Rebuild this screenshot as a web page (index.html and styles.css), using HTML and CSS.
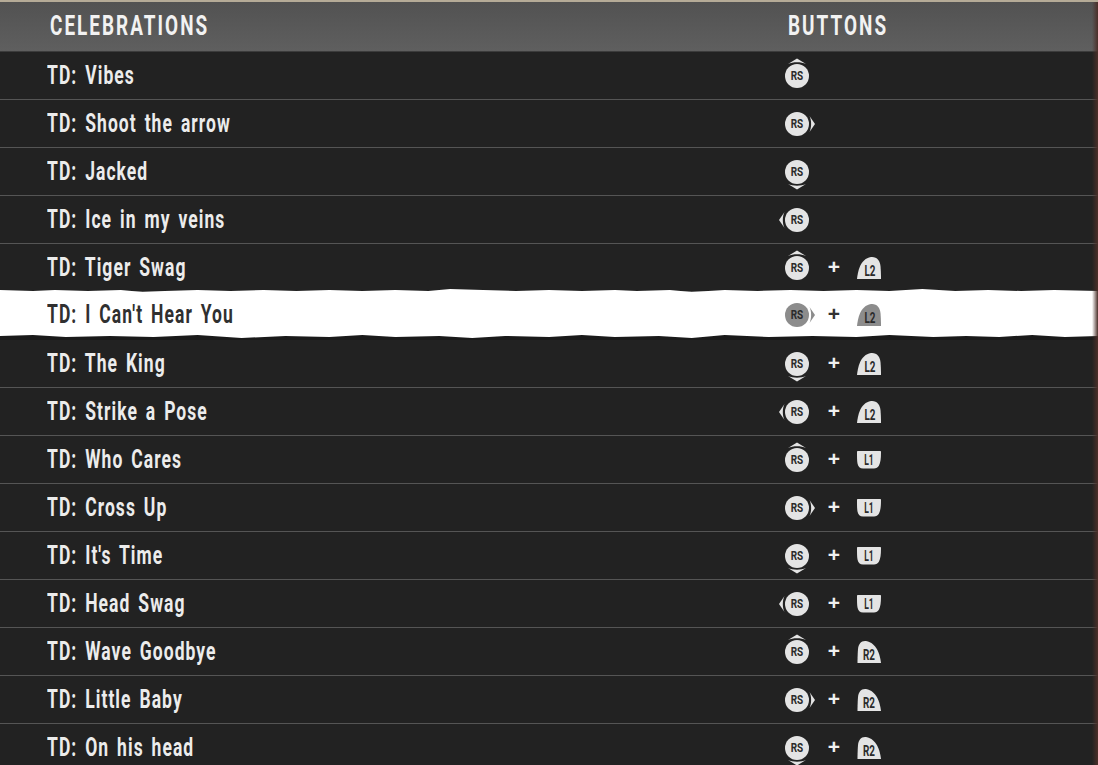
FILE: index.html
```html
<!DOCTYPE html>
<html lang="en">
<head>
<meta charset="utf-8">
<title>Celebrations</title>
<link rel="stylesheet" href="styles.css">
</head>
<body>
<svg class="defs" width="0" height="0" aria-hidden="true">
  <symbol id="rs" viewBox="0 0 36 36">
    <circle cx="18" cy="18" r="12" fill="currentColor"/>
  </symbol>
  <symbol id="up" viewBox="0 0 36 36"><path d="M9 6 18 .5 27 6C22 3.800 14 3.800 9 6Z" fill="currentColor"/></symbol>
  <symbol id="right" viewBox="0 0 36 36"><path d="M30.500 10 36 18l-5.500 8c2.200-4.500 2.200-11.500 0-16Z" fill="currentColor"/></symbol>
  <symbol id="down" viewBox="0 0 36 36"><path d="M9 30 18 35.500 27 30C22 32.200 14 32.200 9 30Z" fill="currentColor"/></symbol>
  <symbol id="left" viewBox="0 0 36 36"><path d="M5.500 10 0 18l5.500 8c-2.200-4.500-2.200-11.500 0-16Z" fill="currentColor"/></symbol>
  <symbol id="dome-l" viewBox="0 0 24 24"><path d="M0 23C1 15 3 3 14 1c6-.6 9 4 9.500 9 .4 5 .5 9 .5 13Z" fill="currentColor"/></symbol>
  <symbol id="dome-r" viewBox="0 0 24 24"><path d="M24 23C23 15 20 3 9 1 4 .5 1.500 4 1 9 .6 14 .5 19 .5 23Z" fill="currentColor"/></symbol>
  <symbol id="bumper" viewBox="0 0 24 20"><path d="M1 1h22c1 0 1 .5 1 1.500 0 6-.5 10-2 13-1 2-3 3-5 3H6c-3 0-5-2-5.500-5C0 11 0 6 0 2.500 0 1.500 0 1 1 1Z" fill="currentColor"/></symbol>
</svg>

<main class="panel">
  <header class="head">
    <h1 class="head-name">CELEBRATIONS</h1>
    <h2 class="head-name">BUTTONS</h2>
  </header>

  <div class="row"><span class="name">TD: Vibes</span><span class="combo"><svg class="stick" viewBox="0 0 36 36"><use href="#rs"/><use href="#up"/><text x="18" y="22" textLength="12.500" lengthAdjust="spacingAndGlyphs" class="rs-t">RS</text></svg></span></div>
  <div class="row"><span class="name">TD: Shoot the arrow</span><span class="combo"><svg class="stick" viewBox="0 0 36 36"><use href="#rs"/><use href="#right"/><text x="18" y="22" textLength="12.500" lengthAdjust="spacingAndGlyphs" class="rs-t">RS</text></svg></span></div>
  <div class="row"><span class="name">TD: Jacked</span><span class="combo"><svg class="stick" viewBox="0 0 36 36"><use href="#rs"/><use href="#down"/><text x="18" y="22" textLength="12.500" lengthAdjust="spacingAndGlyphs" class="rs-t">RS</text></svg></span></div>
  <div class="row"><span class="name">TD: Ice in my veins</span><span class="combo"><svg class="stick" viewBox="0 0 36 36"><use href="#rs"/><use href="#left"/><text x="18" y="22" textLength="12.500" lengthAdjust="spacingAndGlyphs" class="rs-t">RS</text></svg></span></div>

  <div class="row"><span class="name">TD: Tiger Swag</span><span class="combo"><svg class="stick" viewBox="0 0 36 36"><use href="#rs"/><use href="#up"/><text x="18" y="22" textLength="12.500" lengthAdjust="spacingAndGlyphs" class="rs-t">RS</text></svg><span class="plus">+</span><svg class="trig" viewBox="0 0 24 24"><use href="#dome-l"/><text x="13" y="19.500" textLength="11" lengthAdjust="spacingAndGlyphs" class="tr-t">L2</text></svg></span></div>
  <div class="row row-on"><span class="name">TD: I Can't Hear You</span><span class="combo"><svg class="stick" viewBox="0 0 36 36"><use href="#rs"/><use href="#right"/><text x="18" y="22" textLength="12.500" lengthAdjust="spacingAndGlyphs" class="rs-t">RS</text></svg><span class="plus">+</span><svg class="trig" viewBox="0 0 24 24"><use href="#dome-l"/><text x="13" y="19.500" textLength="11" lengthAdjust="spacingAndGlyphs" class="tr-t">L2</text></svg></span></div>
  <div class="row"><span class="name">TD: The King</span><span class="combo"><svg class="stick" viewBox="0 0 36 36"><use href="#rs"/><use href="#down"/><text x="18" y="22" textLength="12.500" lengthAdjust="spacingAndGlyphs" class="rs-t">RS</text></svg><span class="plus">+</span><svg class="trig" viewBox="0 0 24 24"><use href="#dome-l"/><text x="13" y="19.500" textLength="11" lengthAdjust="spacingAndGlyphs" class="tr-t">L2</text></svg></span></div>
  <div class="row"><span class="name">TD: Strike a Pose</span><span class="combo"><svg class="stick" viewBox="0 0 36 36"><use href="#rs"/><use href="#left"/><text x="18" y="22" textLength="12.500" lengthAdjust="spacingAndGlyphs" class="rs-t">RS</text></svg><span class="plus">+</span><svg class="trig" viewBox="0 0 24 24"><use href="#dome-l"/><text x="13" y="19.500" textLength="11" lengthAdjust="spacingAndGlyphs" class="tr-t">L2</text></svg></span></div>

  <div class="row"><span class="name">TD: Who Cares</span><span class="combo"><svg class="stick" viewBox="0 0 36 36"><use href="#rs"/><use href="#up"/><text x="18" y="22" textLength="12.500" lengthAdjust="spacingAndGlyphs" class="rs-t">RS</text></svg><span class="plus">+</span><svg class="trig" viewBox="0 0 24 24"><use href="#bumper" y="2" height="20" width="24"/><text x="12" y="17" textLength="9.500" lengthAdjust="spacingAndGlyphs" class="tr-t">L1</text></svg></span></div>
  <div class="row"><span class="name">TD: Cross Up</span><span class="combo"><svg class="stick" viewBox="0 0 36 36"><use href="#rs"/><use href="#right"/><text x="18" y="22" textLength="12.500" lengthAdjust="spacingAndGlyphs" class="rs-t">RS</text></svg><span class="plus">+</span><svg class="trig" viewBox="0 0 24 24"><use href="#bumper" y="2" height="20" width="24"/><text x="12" y="17" textLength="9.500" lengthAdjust="spacingAndGlyphs" class="tr-t">L1</text></svg></span></div>
  <div class="row"><span class="name">TD: It's Time</span><span class="combo"><svg class="stick" viewBox="0 0 36 36"><use href="#rs"/><use href="#down"/><text x="18" y="22" textLength="12.500" lengthAdjust="spacingAndGlyphs" class="rs-t">RS</text></svg><span class="plus">+</span><svg class="trig" viewBox="0 0 24 24"><use href="#bumper" y="2" height="20" width="24"/><text x="12" y="17" textLength="9.500" lengthAdjust="spacingAndGlyphs" class="tr-t">L1</text></svg></span></div>
  <div class="row"><span class="name">TD: Head Swag</span><span class="combo"><svg class="stick" viewBox="0 0 36 36"><use href="#rs"/><use href="#left"/><text x="18" y="22" textLength="12.500" lengthAdjust="spacingAndGlyphs" class="rs-t">RS</text></svg><span class="plus">+</span><svg class="trig" viewBox="0 0 24 24"><use href="#bumper" y="2" height="20" width="24"/><text x="12" y="17" textLength="9.500" lengthAdjust="spacingAndGlyphs" class="tr-t">L1</text></svg></span></div>

  <div class="row"><span class="name">TD: Wave Goodbye</span><span class="combo"><svg class="stick" viewBox="0 0 36 36"><use href="#rs"/><use href="#up"/><text x="18" y="22" textLength="12.500" lengthAdjust="spacingAndGlyphs" class="rs-t">RS</text></svg><span class="plus">+</span><svg class="trig" viewBox="0 0 24 24"><use href="#dome-r"/><text x="12" y="19.500" textLength="12" lengthAdjust="spacingAndGlyphs" class="tr-t">R2</text></svg></span></div>
  <div class="row"><span class="name">TD: Little Baby</span><span class="combo"><svg class="stick" viewBox="0 0 36 36"><use href="#rs"/><use href="#right"/><text x="18" y="22" textLength="12.500" lengthAdjust="spacingAndGlyphs" class="rs-t">RS</text></svg><span class="plus">+</span><svg class="trig" viewBox="0 0 24 24"><use href="#dome-r"/><text x="12" y="19.500" textLength="12" lengthAdjust="spacingAndGlyphs" class="tr-t">R2</text></svg></span></div>
  <div class="row"><span class="name">TD: On his head</span><span class="combo"><svg class="stick" viewBox="0 0 36 36"><use href="#rs"/><use href="#down"/><text x="18" y="22" textLength="12.500" lengthAdjust="spacingAndGlyphs" class="rs-t">RS</text></svg><span class="plus">+</span><svg class="trig" viewBox="0 0 24 24"><use href="#dome-r"/><text x="12" y="19.500" textLength="12" lengthAdjust="spacingAndGlyphs" class="tr-t">R2</text></svg></span></div>
</main>
</body>
</html>
```
FILE: styles.css
```css
* { box-sizing: border-box; }
html, body { margin: 0; height: 100%; }
body {
  background: #222;
  overflow: hidden;
  font-family: Roboto, "Liberation Sans", sans-serif;
  color: #eee;
}
.defs { position: absolute; }
.panel {
  position: relative;
  height: 765px;
  overflow: hidden;
  border-top: 2px solid #b5ab97;
}
.panel::after {
  content: "";
  position: absolute;
  inset: 0 0 0 auto;
  width: 6px;
  background: linear-gradient(90deg, rgba(60, 35, 30, 0), #4b2f29);
  pointer-events: none;
}
.head {
  display: grid;
  grid-template-columns: 738px 1fr;
  align-items: center;
  height: 50px;
  padding-left: 50px;
  background: linear-gradient(#525252, #5f5f5f);
  border-bottom: 1px solid #3c3c3c;
}
.head-name {
  justify-self: start;
  margin: 0;
  font-size: 27px;
  font-weight: 700;
  letter-spacing: 2.900px;
  color: #f2f2f2;
  line-height: 1;
  transform: scaleX(.7);
  transform-origin: left center;
}
.row {
  position: relative;
  display: grid;
  grid-template-columns: 732px 1fr;
  align-items: center;
  height: 48px;
  padding-left: 47px;
  border-bottom: 1px solid #555;
  background: #222;
}
.name {
  position: relative;
  justify-self: start;
  font-size: 25px;
  font-weight: 700;
  letter-spacing: 1.500px;
  word-spacing: 3.600px;
  line-height: 1;
  color: #ececec;
  transform: scaleX(.7);
  transform-origin: left center;
}
.combo {
  position: relative;
  display: flex;
  align-items: center;
  color: #e4e4e4;
}
.stick { width: 36px; height: 36px; flex: none; }
.plus {
  position: relative;
  top: -1px;
  width: 26px;
  margin-left: 6px;
  text-align: center;
  font-family: "Liberation Sans", sans-serif;
  font-size: 21px;
  font-weight: 700;
  line-height: 1;
  color: #f0f0f0;
}
.trig { width: 24px; height: 24px; flex: none; margin-left: 10px; }
.rs-t {
  font-family: Roboto, "Liberation Sans", sans-serif;
  font-size: 12px;
  font-weight: 700;
  text-anchor: middle;
  fill: #2a2a2a;
}
.tr-t {
  font-family: Roboto, "Liberation Sans", sans-serif;
  font-size: 14px;
  font-weight: 700;
  text-anchor: middle;
  fill: #2a2a2a;
}
.row-on { border-bottom-color: transparent; background: #1a1a1a; }
.row-on::before {
  content: "";
  position: absolute;
  left: 0;
  right: 0;
  top: -3px;
  height: 49px;
  background: #fff;
  clip-path: polygon(0 1px, 3% 2px, 5% 1px, 8% 2px, 11% 1px, 13% 3px, 15% 2px, 18% 1px, 21% 2px, 24% 1px, 27% 2px, 30% 1px, 33% 2px, 36% 1px, 39% 2px, 41% 0, 44% 1px, 47% 2px, 50% 1px, 53% 2px, 56% 1px, 58% 2px, 61% 1px, 63% 3px, 66% 1px, 69% 2px, 72% 1px, 75% 2px, 78% 1px, 81% 2px, 84% 0, 87% 2px, 90% 1px, 93% 2px, 96% 1px, 100% 2px, 100% 47px, 97% 48px, 94% 46px, 91% 48px, 88% 47px, 85% 48px, 81% 46px, 78% 48px, 74% 47px, 70% 48px, 66% 46px, 63% 49px, 60% 47px, 56% 48px, 53% 46px, 50% 48px, 46% 47px, 43% 49px, 40% 47px, 36% 48px, 33% 46px, 30% 48px, 26% 47px, 22% 49px, 18% 46px, 14% 48px, 10% 47px, 6% 48px, 3% 46px, 0 47px);
}
.row-on .name { color: #303030; top: -1px; }
.row-on .combo { color: #8c8c8c; top: -1px; }
.row-on .plus { color: #333; }
```
